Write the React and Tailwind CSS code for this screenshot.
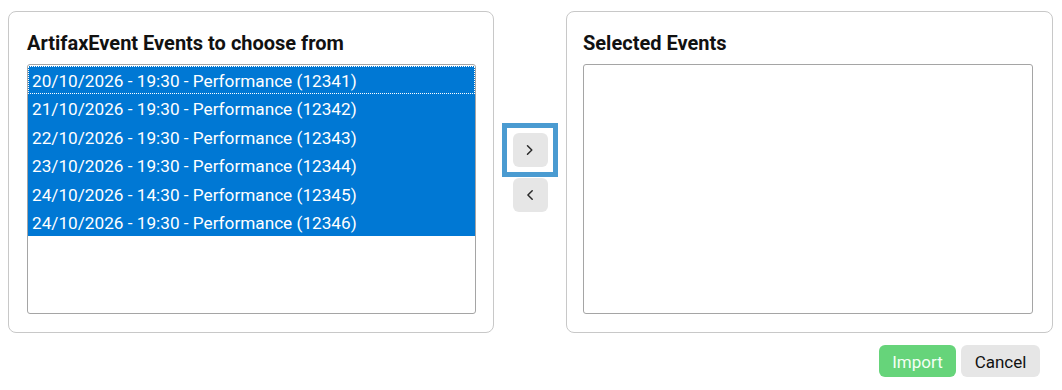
import React from "react";

const events = [
  "20/10/2026 - 19:30 - Performance (12341)",
  "21/10/2026 - 19:30 - Performance (12342)",
  "22/10/2026 - 19:30 - Performance (12343)",
  "23/10/2026 - 19:30 - Performance (12344)",
  "24/10/2026 - 14:30 - Performance (12345)",
  "24/10/2026 - 19:30 - Performance (12346)",
];

function Chevron({ dir }) {
  return (
    <svg width="10" height="12" viewBox="0 0 10 12" fill="none" stroke="#2a2a2a" strokeWidth="1.5" strokeLinecap="round" strokeLinejoin="round">
      {dir === "right" ? <path d="M2.5 1.8 L6.8 6 L2.5 10.2" /> : <path d="M7.2 1.8 L2.9 6 L7.2 10.2" />}
    </svg>
  );
}

export default function App() {
  return (
    <div className="w-[1062px] h-[390px] bg-white text-black" style={{ fontFamily: "Roboto, 'Noto Sans', sans-serif" }}>
      <div className="flex pl-2 pr-[9px] pt-[11px]">
        <div className="w-[486px] h-[322px] border border-[#c8c8c8] rounded-[8px] pl-[18px] pt-[19px]">
          <div className="h-[24px] leading-[24px] text-[20px] font-bold text-[#111] mb-[9px]">ArtifaxEvent Events to choose from</div>
          <div className="w-[449px] h-[250px] border border-[#a5a5a5] rounded-[3px] pt-px overflow-hidden">
            {events.map((e, i) => (
              <div
                key={e}
                className={
                  "h-[28.4px] leading-[31px] px-[4px] bg-[#0078d4] text-white text-[17.2px] whitespace-nowrap " +
                  (i === 0 ? "outline outline-1 outline-dotted outline-white -outline-offset-1" : "")
                }
              >
                {e}
              </div>
            ))}
          </div>
        </div>
        <div className="w-[72px] flex flex-col items-center pt-[122px] gap-[11px]">
          <button className="relative w-[35px] h-[34px] rounded-[6px] bg-[#e6e6e6] flex items-center justify-center">
            <span className="absolute -top-[10px] -bottom-[10px] -left-[11px] -right-[10px] border-[5px] border-[#4a9bd1]"></span>
            <Chevron dir="right" />
          </button>
          <button className="w-[35px] h-[34px] rounded-[6px] bg-[#e6e6e6] flex items-center justify-center">
            <Chevron dir="left" />
          </button>
        </div>
        <div className="w-[487px] h-[322px] border border-[#c8c8c8] rounded-[8px] pl-[16px] pt-[19px]">
          <div className="h-[24px] leading-[24px] text-[20px] font-bold text-[#111] mb-[9px]">Selected Events</div>
          <div className="w-[450px] h-[250px] border border-[#a5a5a5] rounded-[3px]"></div>
        </div>
      </div>
      <div className="flex justify-end gap-[5px] pr-[22px] pt-[12px]">
        <button className="w-[77px] h-[32px] rounded-[6px] bg-[#66d47a] text-[#f4fff4] text-[17px] leading-[34px]">Import</button>
        <button className="w-[79px] h-[32px] rounded-[6px] bg-[#e6e6e6] text-[#111] text-[17px] leading-[34px]">Cancel</button>
      </div>
    </div>
  );
}
